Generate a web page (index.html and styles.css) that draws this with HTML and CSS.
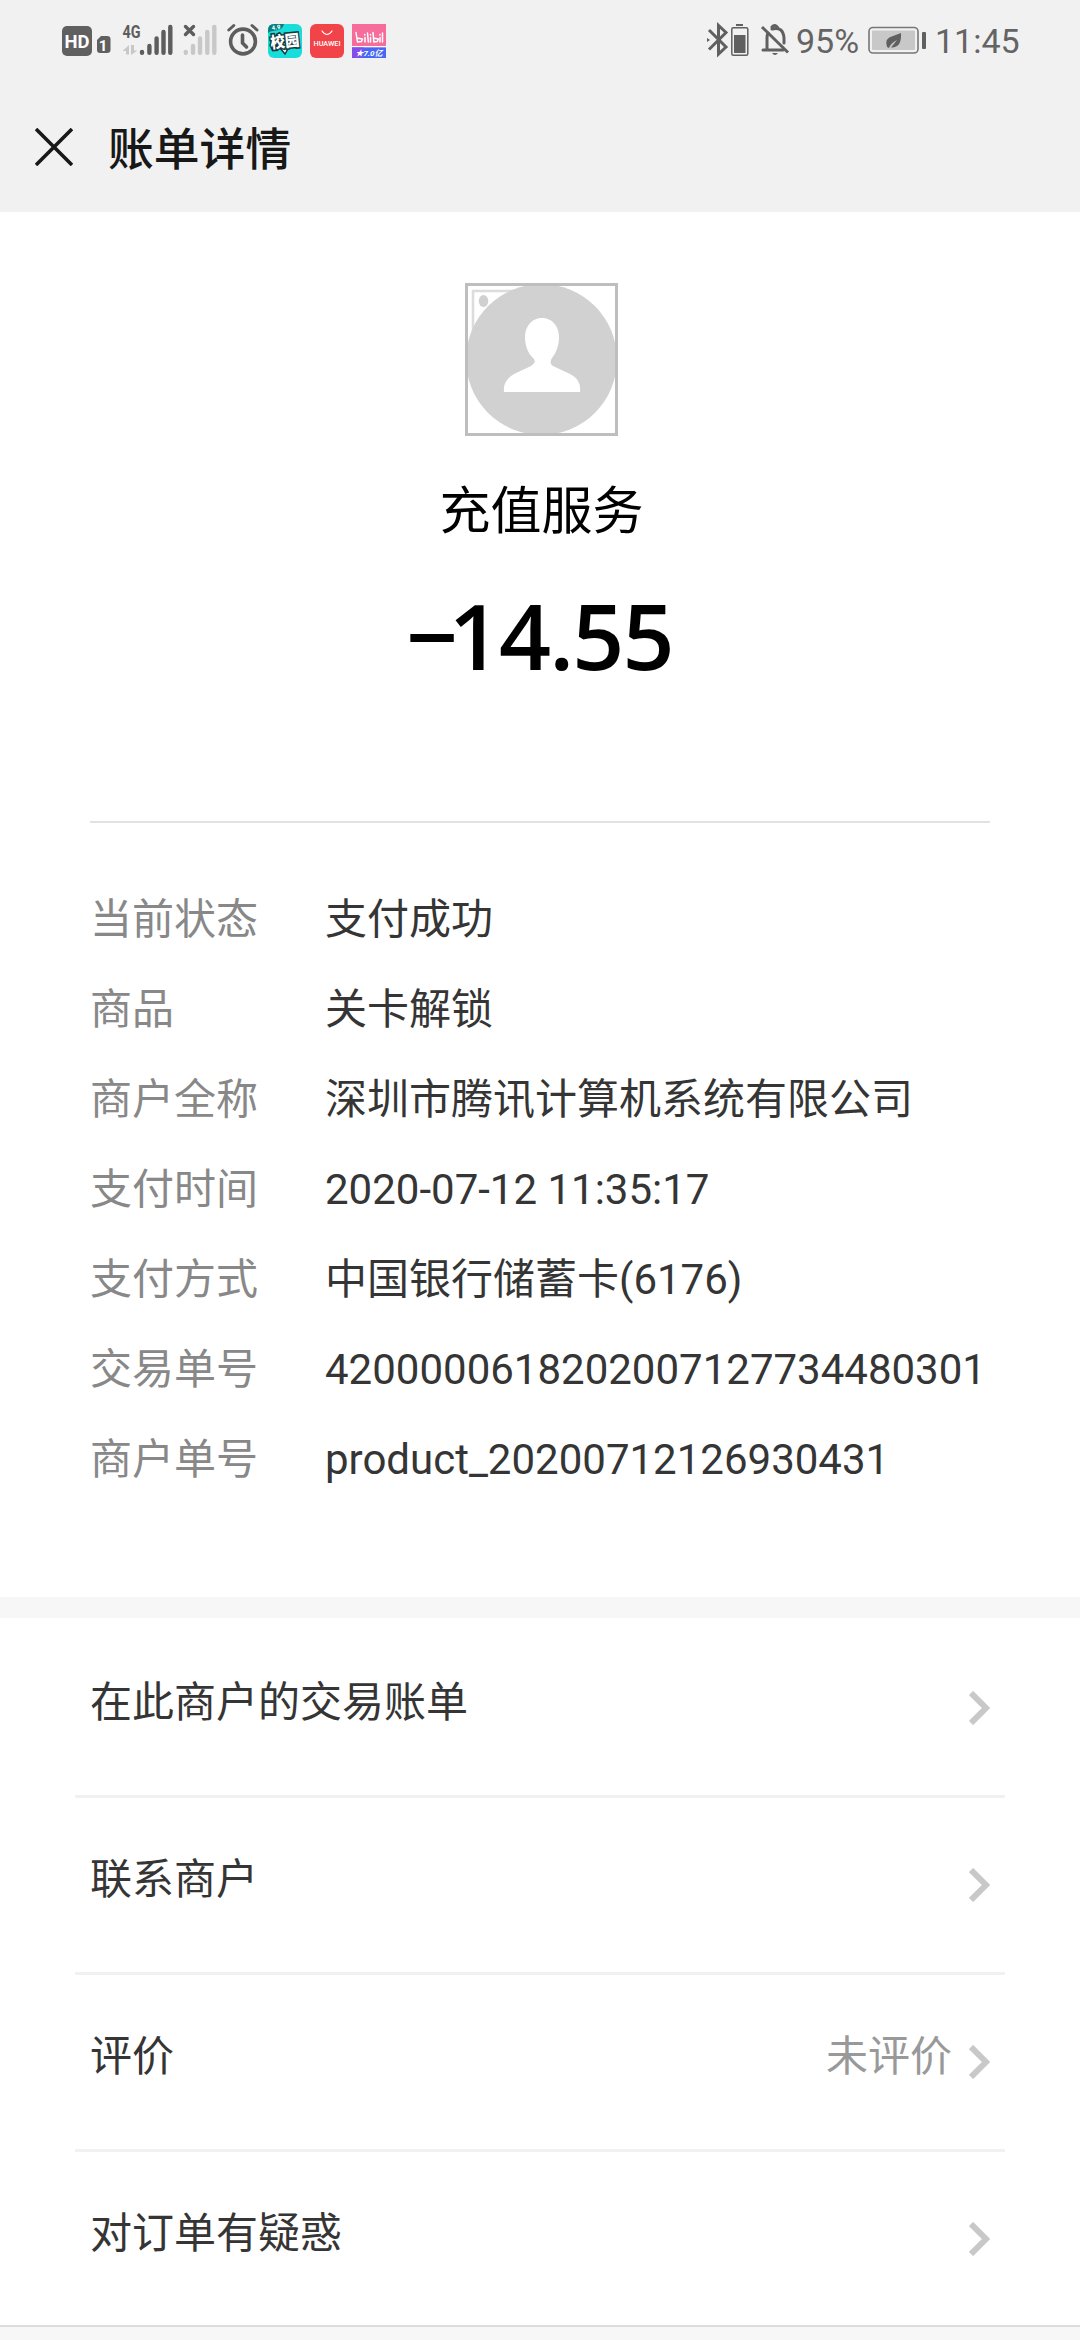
FILE: index.html
```html
<!DOCTYPE html>
<html lang="zh-CN">
<head>
<meta charset="utf-8">
<title>账单详情</title>
<link rel="stylesheet" href="styles.css">
</head>
<body>
<header class="header">
  <div class="status">
    <svg class="status-left" width="330" height="40" viewBox="60 22 330 40">
      <rect x="62" y="26" width="30" height="30" rx="5" fill="#606060"/>
      <text class="hd" x="77" y="47.500" text-anchor="middle" textLength="25" lengthAdjust="spacingAndGlyphs">HD</text>
      <path d="M97 40l4-4h6q3.500 0 3.500 3v11q0 3-3.500 3h-7q-3 0-3-3z" fill="#606060"/>
      <text class="sim" x="103" y="51" text-anchor="middle">1</text>
      <text class="net" x="122.500" y="38" textLength="18" lengthAdjust="spacingAndGlyphs">4G</text>
      <path d="M122.500 51l6.500-6v9.500h-3V51zM131 45h3v5.500h3.500L131 55z" fill="#c8c8c8"/>
      <g stroke="#5d5d5d" stroke-width="4.400" stroke-linecap="round"><path d="M142 52v.8M149.400 46v6.800M156.600 38.500v14.300M163.500 32v20.800M170.300 27v25.800"/></g>
      <g stroke="#c8c8c8" stroke-width="4.400" stroke-linecap="round"><path d="M185.800 52v.8M193 46v6.800M200 38.500v14.300M207.300 32v20.800M214.300 27v25.800"/></g>
      <path d="M185.500 26.500l8 8m0-8l-8 8" stroke="#5d5d5d" stroke-width="3.400" stroke-linecap="round"/>
      <g fill="none" stroke="#5d5d5d" stroke-width="3.600" stroke-linecap="round" stroke-linejoin="round"><circle cx="243" cy="41.500" r="12.400"/><path d="M242.500 35v8l4 4"/><path d="M228.800 30l5-4.500M257 30l-5-4.500" stroke-width="3"/></g>
      <rect x="268" y="24" width="34" height="34" rx="6" fill="#18dedb"/>
      <path d="M268 33v-3q0-6 6-6h10q-1 5-6 6l-5 1q-3 0-5 2z" fill="#087e82"/>
      <text class="tiny" x="272" y="30" transform="rotate(-8 272 30)">4.9</text>
      <path d="M280 48l5 6 4-7z" fill="#fff" stroke="#17383d" stroke-width="1.500"/>
      <text class="campus" x="285" y="47" text-anchor="middle" textLength="29" lengthAdjust="spacingAndGlyphs" transform="rotate(-6 285 42)">校园</text>
      <rect x="310" y="24" width="34" height="34" rx="6" fill="#f14348"/>
      <path d="M322 31q5 7 10 0" fill="none" stroke="#fff" stroke-width="1.200" stroke-linecap="round"/>
      <text class="huawei" x="327" y="46" text-anchor="middle" textLength="27" lengthAdjust="spacingAndGlyphs">HUAWEI</text>
      <rect x="352" y="24" width="34" height="24" fill="#f66d9b"/>
      <path d="M352 46h34v1.500h-34z" fill="#fff"/>
      <rect x="352" y="47.500" width="34" height="10.500" fill="#4768f4"/>
      <path d="M352 47.500h12l-3 10.500h-9z" fill="#824de8"/>
      <g fill="none" stroke="#fff" stroke-width="1.500" stroke-linecap="round" stroke-linejoin="round"><path d="M356 32.500l1.500 9.500 4-.5 1-2.500-4.500-.8M365 37.500v4.500M364.800 34.500v.4M367.500 33l.8 9"/><path d="M370.500 37.500v4.500M370.500 34.500v.4M373 32.500l.8 9.500 3.500-.5 1-2.500-3.800-.8M380 37.500v4.500M380 34.500v.4M382.500 33v9"/></g>
      <text class="promo" x="369" y="56" text-anchor="middle">★7.0亿</text>
    </svg>
    <div class="status-right">
      <svg width="84" height="40" viewBox="705 22 84 40">
        <path d="M708 30l17 17-7.500 7V25.500l7.500 7-17 17" fill="none" stroke="#606060" stroke-width="3"/>
        <path d="M706 38l3 2-3 2zM735 24h7v2h-7z" fill="#606060"/>
        <rect x="730.800" y="27.800" width="16" height="27.500" rx="1.500" fill="none" stroke="#606060" stroke-width="1.500"/>
        <rect x="733" y="35" width="11.500" height="18" fill="#606060"/>
        <path d="M762 50h20M766 49V38q0-3 1-5m4-4q11-3 12 9v5M771 27q3-3.500 6 1" fill="none" stroke="#606060" stroke-width="3" stroke-linecap="round"/>
        <path d="M761 27l26 25.500" stroke="#606060" stroke-width="3"/>
        <path d="M771 53h6q-3 4-6 0z" fill="#606060"/>
      </svg>
      <span class="percent">95%</span>
      <svg width="60" height="40" viewBox="866 22 60 40">
        <rect x="868" y="27.500" width="49" height="25.500" rx="4" fill="none" stroke="#777" stroke-width="1.600"/>
        <rect x="871" y="30.500" width="43" height="19.500" rx="1" fill="#c8c8c8"/>
        <rect x="921" y="32" width="4" height="17" rx="1" fill="#606060"/>
        <path d="M886 47q-3-9 6-11l8-3q1 15-10 14.500l6-7.500q-6 3-8 8z" fill="#606060"/>
      </svg>
      <span class="time">11:45</span>
    </div>
  </div>
  <div class="titlebar">
    <svg width="38" height="38" viewBox="0 0 38 38"><path d="M1 1l36 36M37 1L1 37" stroke="#181818" stroke-width="3.600"/></svg>
    <h1 class="title">账单详情</h1>
  </div>
</header>

<main>
  <section class="summary">
    <svg class="avatar" width="153" height="153" viewBox="0 0 153 153">
      <path d="M8 48V8h42" fill="none" stroke="#dcdcdc" stroke-width="2.500"/>
      <ellipse cx="18.500" cy="18" rx="4.800" ry="6" fill="#d0d0d0"/>
      <circle cx="76.500" cy="76.500" r="75.500" fill="#d1d1d1"/>
      <path d="M77 35c10 0 17 8 17 19 0 9-3 16-7 21-2 3-2 6 1 8l17 8c8 4 11 10 10 18H39c-1-8 3-14 10-18l17-8c4-3 5-5 2-8-5-5-8-12-8-21 0-11 7-19 17-19z" fill="#fff"/>
      <rect x="1.500" y="1.500" width="150" height="150" fill="none" stroke="#bebebe" stroke-width="3"/>
    </svg>
    <div class="merchant">充值服务</div>
    <div class="amount"><span class="minus">−</span>14.55</div>
  </section>

  <dl class="details">
    <dt>当前状态</dt><dd>支付成功</dd>
    <dt>商品</dt><dd>关卡解锁</dd>
    <dt>商户全称</dt><dd>深圳市腾讯计算机系统有限公司</dd>
    <dt>支付时间</dt><dd>2020-07-12 11:35:17</dd>
    <dt>支付方式</dt><dd>中国银行储蓄卡(6176)</dd>
    <dt>交易单号</dt><dd>4200000618202007127734480301</dd>
    <dt>商户单号</dt><dd>product_20200712126930431</dd>
  </dl>

  <nav class="links">
    <a class="link"><span>在此商户的交易账单</span><svg class="chevron" viewBox="0 0 21 34"><path d="M2 2l15 15L2 32"/></svg></a>
    <a class="link"><span>联系商户</span><svg class="chevron" viewBox="0 0 21 34"><path d="M2 2l15 15L2 32"/></svg></a>
    <a class="link"><span>评价</span><span class="note">未评价</span><svg class="chevron" viewBox="0 0 21 34"><path d="M2 2l15 15L2 32"/></svg></a>
    <a class="link"><span>对订单有疑惑</span><svg class="chevron" viewBox="0 0 21 34"><path d="M2 2l15 15L2 32"/></svg></a>
  </nav>
</main>
</body>
</html>
```
FILE: styles.css
```css
* {
  box-sizing: border-box;
  margin: 0;
  padding: 0;
}

body {
  height: 2340px;
  overflow: hidden;
  background: #f7f7f7;
  color: #353535;
  font-family: Roboto, "Noto Sans CJK SC", sans-serif;
  font-size: 42px;
}

svg {
  display: block;
  flex: none;
}

.header {
  height: 212px;
  background: #f1f1f1;
}

.status {
  display: flex;
  justify-content: space-between;
  height: 84px;
  padding: 22px 61px 0 60px;
}

.status-right {
  display: flex;
  height: 40px;
  line-height: 39px;
  font-size: 34px;
  color: #646464;
}

.percent {
  width: 71px;
  margin-left: 6px;
}

.time {
  width: 84px;
  margin-left: 8px;
}

.hd {
  font: 700 19px Roboto, sans-serif;
  fill: #fff;
}

.sim {
  font: 700 15px Roboto, sans-serif;
  fill: #fff;
}

.net {
  font: 700 18px Roboto, sans-serif;
  fill: #5d5d5d;
}

.tiny {
  font: 700 6px Roboto, sans-serif;
  fill: #fff;
}

.campus {
  font: 900 16px "Noto Sans CJK SC", sans-serif;
  fill: #fff;
  stroke: #17383d;
  stroke-width: 3px;
  paint-order: stroke;
}

.huawei {
  font: 500 7.5px Roboto, sans-serif;
  fill: #fff;
}

.promo {
  font: italic 700 8px Roboto, "Noto Sans CJK SC", sans-serif;
  fill: #fff;
}

.titlebar {
  display: flex;
  align-items: center;
  gap: 35px;
  height: 125px;
  padding-left: 35px;
}

.title {
  color: #181818;
  font-size: 45.8px;
  font-weight: 500;
  line-height: 60px;
  padding-top: 8px;
}

.summary {
  display: flex;
  flex-direction: column;
  align-items: center;
  height: 609px;
  padding: 71px 0 0 3px;
  background: #fff;
  color: #000;
}

.merchant {
  margin-top: 46px;
  font-size: 51px;
  line-height: 60px;
}

.amount {
  height: 100px;
  margin: 43px 4px 0 0;
  font: 550 91px/100px "Open Sans", "Noto Sans", sans-serif;
  letter-spacing: -1.8px;
  white-space: nowrap;
}

.minus {
  letter-spacing: -9.5px;
}

.details {
  display: grid;
  grid-template-columns: 235px 1fr;
  grid-auto-rows: 90px;
  height: 776px;
  padding: 54px 0 0 90px;
  background: linear-gradient(#e2e2e2, #e2e2e2) 90px 0 / 900px 2px no-repeat #fff;
  line-height: 90px;
}

.details dt {
  color: #888;
}

.details dd {
  white-space: nowrap;
}

.links {
  height: 709px;
  margin-top: 21px;
  padding: 3px 75px 0;
  background: #fff;
  border-bottom: 2px solid #dcdcdc;
}

.link {
  display: flex;
  align-items: center;
  height: 177px;
  padding: 0 15px 19px;
  border-bottom: 3px solid #f1f1f1;
}

.link:last-child {
  height: 176px;
  border-bottom-color: transparent;
}

.note {
  margin-left: auto;
  color: #999;
}

.chevron {
  width: 21px;
  height: 34px;
  margin: 19px 0 0 auto;
  fill: none;
  stroke: #c8c8c9;
  stroke-width: 6;
}

.note + .chevron {
  margin-left: 17px;
}
```
